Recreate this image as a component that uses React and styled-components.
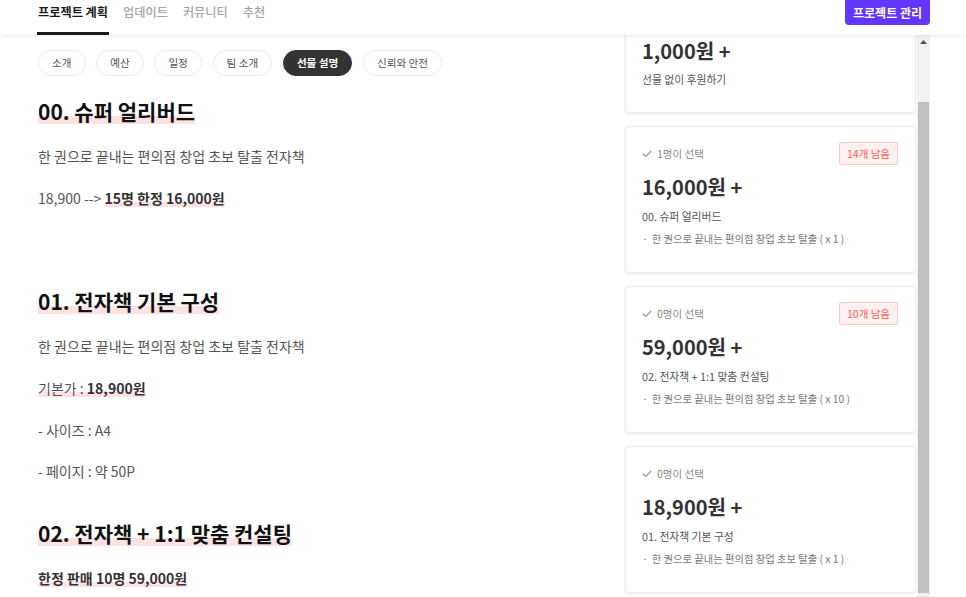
import React, { useLayoutEffect, useRef } from "react";
import styled, { createGlobalStyle } from "styled-components";

const Global = createGlobalStyle`
  html, body { margin: 0; padding: 0; background: #fff; overflow: hidden; }
  body { font-family: "Noto Sans CJK KR", "Noto Sans", sans-serif; color: #333; }
  * { box-sizing: border-box; }
`;

const Page = styled.div`
  height: 100vh;
  display: flex;
  flex-direction: column;
`;

const Header = styled.header`
  height: 35px;
  flex: none;
  display: flex;
  align-items: flex-start;
  justify-content: space-between;
  padding: 0 36px 0 37px;
  background: #fff;
  box-shadow: 0 2px 4px rgba(0, 0, 0, 0.06);
  position: relative;
  z-index: 2;
`;

const Tabs = styled.nav`
  display: flex;
  gap: 13px;
  height: 100%;
`;

const Tab = styled.div`
  height: 100%;
  padding: 2px 1px 0;
  font-size: 12.2px;
  line-height: 20px;
  font-weight: ${(p) => (p.$active ? 700 : 500)};
  color: ${(p) => (p.$active ? "#1a1a1a" : "#a6a6a6")};
  border-bottom: 3px solid ${(p) => (p.$active ? "#1a1a1a" : "transparent")};
`;

const ManageButton = styled.button`
  height: 25px;
  padding: 0 8px;
  border: none;
  border-radius: 0 0 4px 4px;
  background: #6236ff;
  color: #fff;
  font-family: inherit;
  font-size: 12px;
  font-weight: 700;
  line-height: 25px;
`;

const Body = styled.div`
  flex: 1;
  min-height: 0;
  display: flex;
  padding: 0 36px 0 38px;
  gap: 24px;
`;

const Main = styled.main`
  flex: 1;
  min-width: 0;
  overflow: hidden;
  padding-top: 15px;
`;

const Pills = styled.div`
  display: flex;
  gap: 10.7px;
  margin-bottom: 19px;
`;

const Pill = styled.div`
  height: 26px;
  padding: 0 13px;
  border-radius: 13px;
  border: 1px solid ${(p) => (p.$active ? "#333" : "#ececec")};
  background: ${(p) => (p.$active ? "#333" : "#fff")};
  color: ${(p) => (p.$active ? "#fff" : "#555")};
  font-size: 10.6px;
  font-weight: ${(p) => (p.$active ? 700 : 400)};
  line-height: 24px;
  text-align: center;
`;

const Heading = styled.h2`
  margin: ${(p) => (p.$first ? "0" : "34px")} 0 17px;
  font-size: 21px;
  line-height: 32px;
  font-weight: 700;
  color: #111;
`;

const Mark = styled.span`
  background: linear-gradient(to bottom, transparent 68%, #ffe2e2 68%, #ffe2e2 94%, transparent 94%);
  font-weight: ${(p) => (p.$bold ? 700 : "inherit")};
  color: ${(p) => (p.$bold ? "#333" : "inherit")};
`;

const Strong = styled.b`
  color: #333;
`;

const Para = styled.p`
  margin: 0 0 17.7px;
  font-size: 14px;
  line-height: 24px;
  color: #555;
  min-height: 24px;
`;

const Side = styled.aside`
  width: 306px;
  flex: none;
  display: flex;
  gap: 1px;
  min-height: 0;
`;

const CardList = styled.div`
  flex: 1;
  overflow-y: scroll;
  scrollbar-width: none;
  display: flex;
  flex-direction: column;
  gap: 13px;
  padding: 0 0 30px 1px;
  &::-webkit-scrollbar { display: none; }
`;

const Card = styled.div`
  flex: none;
  border: 1px solid #ebebeb;
  border-radius: 4px;
  box-shadow: 0 1px 3px rgba(0, 0, 0, 0.09);
  background: #fff;
  padding: 15px 17px 25px 16px;
`;

const TopRow = styled.div`
  height: 23px;
  display: flex;
  align-items: center;
  justify-content: space-between;
  margin-bottom: 8px;
`;

const Chosen = styled.div`
  display: flex;
  align-items: center;
  gap: 5px;
  font-size: 10.5px;
  color: #888;
`;

const Badge = styled.div`
  height: 23px;
  padding: 0 7px;
  border: 1px solid #ffc7c7;
  background: #fff0f0;
  border-radius: 2px;
  color: #ff5c5c;
  font-size: 10.5px;
  line-height: 21px;
`;

const Price = styled.div`
  font-size: 20px;
  line-height: 28px;
  font-weight: 700;
  color: #333;
`;

const RewardTitle = styled.div`
  margin-top: ${(p) => (p.$tight ? 6 : 7)}px;
  font-size: 10.8px;
  line-height: 16px;
  color: #555;
`;

const Item = styled.div`
  margin-top: 7px;
  font-size: 10.3px;
  line-height: 16px;
  color: #777;
  display: flex;
  gap: 4px;
`;

const Scrollbar = styled.div`
  width: 13px;
  flex: none;
  background: #f1f1f1;
  display: flex;
  flex-direction: column;
  align-items: center;
`;

const ArrowUp = styled.div`
  height: 14px;
  display: flex;
  align-items: center;
  justify-content: center;
`;

const Thumb = styled.div`
  margin-top: 53px;
  width: 11px;
  height: 491px;
  background: #c1c1c1;
`;

const Check = () => (
  <svg width="10" height="8" viewBox="0 0 10 8">
    <polyline points="1,4 3.8,6.6 9,1.2" fill="none" stroke="#888" strokeWidth="1.1" />
  </svg>
);

const rewards = [
  { chosen: "1명이 선택", badge: "14개 남음", price: "16,000원 +", title: "00. 슈퍼 얼리버드", qty: "( x 1 )" },
  { chosen: "0명이 선택", badge: "10개 남음", price: "59,000원 +", title: "02. 전자책 + 1:1 맞춤 컨설팅", qty: "( x 10 )" },
  { chosen: "0명이 선택", badge: null, price: "18,900원 +", title: "01. 전자책 기본 구성", qty: "( x 1 )" },
];

export default function App() {
  const listRef = useRef(null);
  useLayoutEffect(() => {
    if (listRef.current) listRef.current.scrollTop = 14;
  }, []);

  return (
    <Page>
      <Global />
      <Header>
        <Tabs>
          <Tab $active>프로젝트 계획</Tab>
          <Tab>업데이트</Tab>
          <Tab>커뮤니티</Tab>
          <Tab>추천</Tab>
        </Tabs>
        <ManageButton>프로젝트 관리</ManageButton>
      </Header>
      <Body>
        <Main>
          <Pills>
            <Pill>소개</Pill>
            <Pill>예산</Pill>
            <Pill>일정</Pill>
            <Pill>팀 소개</Pill>
            <Pill $active>선물 설명</Pill>
            <Pill>신뢰와 안전</Pill>
          </Pills>

          <Heading $first><Mark>00. 슈퍼 얼리버드</Mark></Heading>
          <Para>한 권으로 끝내는 편의점 창업 초보 탈출 전자책</Para>
          <Para>18,900 --&gt; <Mark $bold>15명 한정 16,000원</Mark></Para>
          <Para />

          <Heading><Mark>01. 전자책 기본 구성</Mark></Heading>
          <Para>한 권으로 끝내는 편의점 창업 초보 탈출 전자책</Para>
          <Para><Mark>기본가 : <Strong>18,900원</Strong></Mark></Para>
          <Para>- 사이즈 : A4</Para>
          <Para>- 페이지 : 약 50P</Para>

          <Heading><Mark>02. 전자책 + 1:1 맞춤 컨설팅</Mark></Heading>
          <Para><Mark $bold>한정 판매 10명 59,000원</Mark></Para>
        </Main>

        <Side>
          <CardList ref={listRef}>
            <Card>
              <Price>1,000원 +</Price>
              <RewardTitle $tight>선물 없이 후원하기</RewardTitle>
            </Card>
            {rewards.map((r) => (
              <Card key={r.price}>
                <TopRow>
                  <Chosen><Check />{r.chosen}</Chosen>
                  {r.badge && <Badge>{r.badge}</Badge>}
                </TopRow>
                <Price>{r.price}</Price>
                <RewardTitle>{r.title}</RewardTitle>
                <Item><span>·</span><span>한 권으로 끝내는 편의점 창업 초보 탈출 {r.qty}</span></Item>
              </Card>
            ))}
          </CardList>
          <Scrollbar>
            <ArrowUp>
              <svg width="7" height="4" viewBox="0 0 7 4"><polygon points="0,4 3.5,0 7,4" fill="#505050" /></svg>
            </ArrowUp>
            <Thumb />
          </Scrollbar>
        </Side>
      </Body>
    </Page>
  );
}
